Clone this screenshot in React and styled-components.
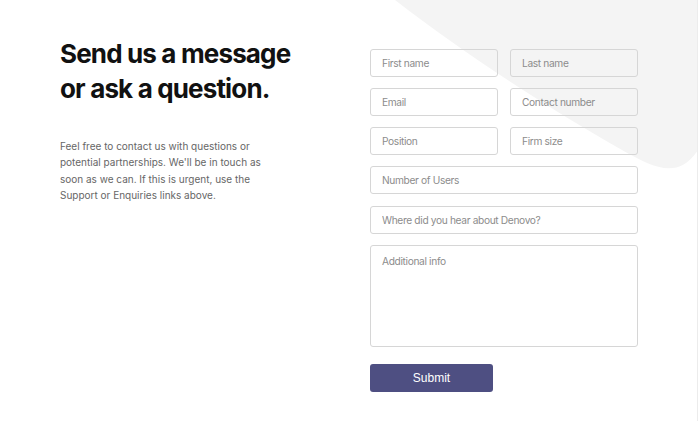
import React from "react";
import styled, { createGlobalStyle } from "styled-components";

const Global = createGlobalStyle`
  html, body { margin: 0; padding: 0; background: #fff; }
  body { font-family: "Inter", "Liberation Sans", sans-serif; }
  * { box-sizing: border-box; }
`;

const Page = styled.div`
  position: relative;
  width: 698px;
  height: 421px;
  overflow: hidden;
  border-right: 1px solid #ececec;
  background: #fff;
`;

const Blob = styled.svg`
  position: absolute;
  top: 0;
  left: 0;
  width: 698px;
  height: 421px;
  z-index: 0;
`;

const Content = styled.div`
  position: relative;
  z-index: 1;
  display: grid;
  grid-template-columns: 310px 268px;
  padding: 36px 0 0 60px;
`;

const Intro = styled.div`
  display: flex;
  flex-direction: column;
`;

const Heading = styled.h1`
  margin: 0;
  font-family: "Inter", sans-serif;
  font-weight: 700;
  font-size: 26px;
  line-height: 35px;
  letter-spacing: -0.85px;
  color: #111;
`;

const Text = styled.p`
  margin: 32px 0 0;
  width: 215px;
  font-family: "Inter", sans-serif;
  font-size: 10px;
  line-height: 16.4px;
  color: #666;
`;

const Form = styled.form`
  display: grid;
  grid-template-columns: 128px 128px;
  column-gap: 12px;
  row-gap: 11px;
  margin-top: 13px;
`;

const Field = styled.input`
  grid-column: ${(p) => (p.$wide ? "1 / span 2" : "auto")};
  margin-top: ${(p) => (p.$shift ? "1px" : "0")};
  height: 28px;
  width: 100%;
  padding: 0 11px;
  border: 1px solid #d6d6d6;
  border-radius: 3px;
  background: transparent;
  font-family: "Inter", sans-serif;
  font-size: 10.2px;
  letter-spacing: -0.35px;
  color: #333;
  outline: none;
  &::placeholder { color: #8c8c8c; }
`;

const Area = styled.textarea`
  grid-column: 1 / span 2;
  height: 102px;
  width: 100%;
  padding: 9px 11px;
  border: 1px solid #d6d6d6;
  border-radius: 3px;
  background: transparent;
  resize: none;
  font-family: "Inter", sans-serif;
  font-size: 10.2px;
  letter-spacing: -0.35px;
  outline: none;
  &::placeholder { color: #8c8c8c; }
`;

const Submit = styled.button`
  grid-column: 1;
  margin-top: 6px;
  width: 123px;
  height: 28px;
  border: none;
  border-radius: 3px;
  background: #4e4f82;
  color: #fff;
  font-family: "Liberation Sans", Arial, sans-serif;
  font-size: 12px;
  cursor: pointer;
`;

export default function App() {
  return (
    <>
      <Global />
      <Page>
        <Blob viewBox="0 0 698 421">
          <path
            d="M395,0 C470,58 555,112 622,150 C654,168 678,180 698,150 L698,0 Z"
            fill="#f4f4f4"
          />
        </Blob>
        <Content>
          <Intro>
            <Heading>
              Send us a message
              <br />
              or ask a question.
            </Heading>
            <Text>
              Feel free to contact us with questions or potential partnerships.
              We'll be in touch as soon as we can. If this is urgent, use the
              Support or Enquiries links above.
            </Text>
          </Intro>
          <Form onSubmit={(e) => e.preventDefault()}>
            <Field placeholder="First name" />
            <Field placeholder="Last name" />
            <Field placeholder="Email" />
            <Field placeholder="Contact number" />
            <Field placeholder="Position" />
            <Field placeholder="Firm size" />
            <Field $wide placeholder="Number of Users" />
            <Field $wide $shift placeholder="Where did you hear about Denovo?" />
            <Area placeholder="Additional info" />
            <Submit type="submit">Submit</Submit>
          </Form>
        </Content>
      </Page>
    </>
  );
}
